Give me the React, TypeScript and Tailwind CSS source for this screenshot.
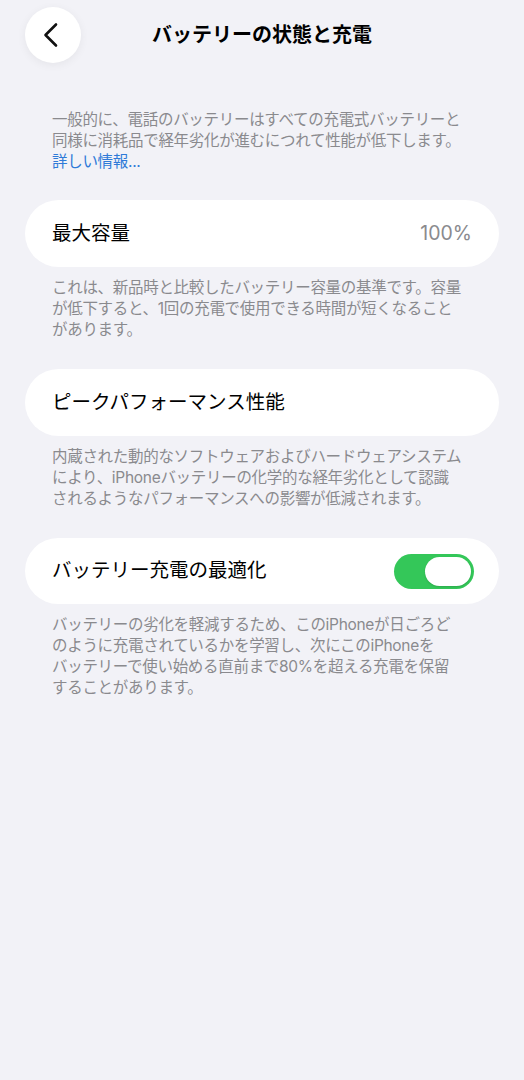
import React, { useState } from 'react'

const font = '[font-family:Inter,"Noto_Sans_CJK_JP",sans-serif]'
const note = 'px-[52px] text-[15.5px] leading-[21px] text-[#8a8a8e] tracking-[-0.3px]'

const Footer = ({ lines }: { lines: string[] }) => (
  <div className={`mt-[10px] ${note}`}>
    {lines.map((l, i) => (
      <div key={i} className="whitespace-nowrap">{l}</div>
    ))}
  </div>
)

const Toggle = ({ on, onChange }: { on: boolean; onChange: () => void }) => (
  <button
    onClick={onChange}
    className={`flex h-[35px] w-[80px] items-center rounded-full p-[3px] ${
      on ? 'justify-end bg-[#34c759]' : 'justify-start bg-[#e3e3e8]'
    }`}
  >
    <span className="h-[29px] w-[46px] rounded-full bg-white shadow-[0_1px_2px_rgba(0,0,0,0.15)]" />
  </button>
)

export default function App() {
  const [optimized, setOptimized] = useState(true)

  return (
    <div className={`min-h-[1080px] w-full bg-[#f2f2f7] ${font}`}>
      <div className="grid grid-cols-[56px_1fr_56px] items-center px-[25px] pt-[7px]">
        <button className="flex h-[56px] w-[56px] items-center justify-center rounded-full bg-white shadow-[0_2px_10px_rgba(0,0,0,0.06)]">
          <svg width="20" height="26" viewBox="0 0 20 26" fill="none" className="-ml-[3px]">
            <path d="M14 2.5 L3.5 13 L14 23.5" stroke="#111" strokeWidth="2.6" strokeLinecap="round" strokeLinejoin="round" />
          </svg>
        </button>
        <h1 className="text-center text-[20px] font-bold text-black">バッテリーの状態と充電</h1>
        <div />
      </div>

      <div className={`mt-[46px] ${note}`}>
        <div className="whitespace-nowrap">一般的に、電話のバッテリーはすべての充電式バッテリーと</div>
        <div className="whitespace-nowrap">同様に消耗品で経年劣化が進むにつれて性能が低下します。</div>
        <div className="text-[#2f7ad8]">詳しい情報...</div>
      </div>

      <div className="mt-[28px] px-[25px]">
        <div className="flex h-[67px] items-center justify-between rounded-full bg-white px-[27px]">
          <span className="text-[19.5px] text-black">最大容量</span>
          <span className="text-[19.5px] text-[#8a8a8e]">100%</span>
        </div>
      </div>
      <Footer
        lines={[
          'これは、新品時と比較したバッテリー容量の基準です。容量',
          'が低下すると、1回の充電で使用できる時間が短くなること',
          'があります。',
        ]}
      />

      <div className="mt-[29px] px-[25px]">
        <div className="flex h-[67px] items-center rounded-full bg-white px-[27px]">
          <span className="text-[19.5px] text-black">ピークパフォーマンス性能</span>
        </div>
      </div>
      <Footer
        lines={[
          '内蔵された動的なソフトウェアおよびハードウェアシステム',
          'により、iPhoneバッテリーの化学的な経年劣化として認識',
          'されるようなパフォーマンスへの影響が低減されます。',
        ]}
      />

      <div className="mt-[29px] px-[25px]">
        <div className="flex h-[66px] items-center justify-between rounded-full bg-white pl-[27px] pr-[25px]">
          <span className="text-[19.5px] text-black">バッテリー充電の最適化</span>
          <Toggle on={optimized} onChange={() => setOptimized(!optimized)} />
        </div>
      </div>
      <Footer
        lines={[
          'バッテリーの劣化を軽減するため、このiPhoneが日ごろど',
          'のように充電されているかを学習し、次にこのiPhoneを',
          'バッテリーで使い始める直前まで80%を超える充電を保留',
          'することがあります。',
        ]}
      />
    </div>
  )
}
